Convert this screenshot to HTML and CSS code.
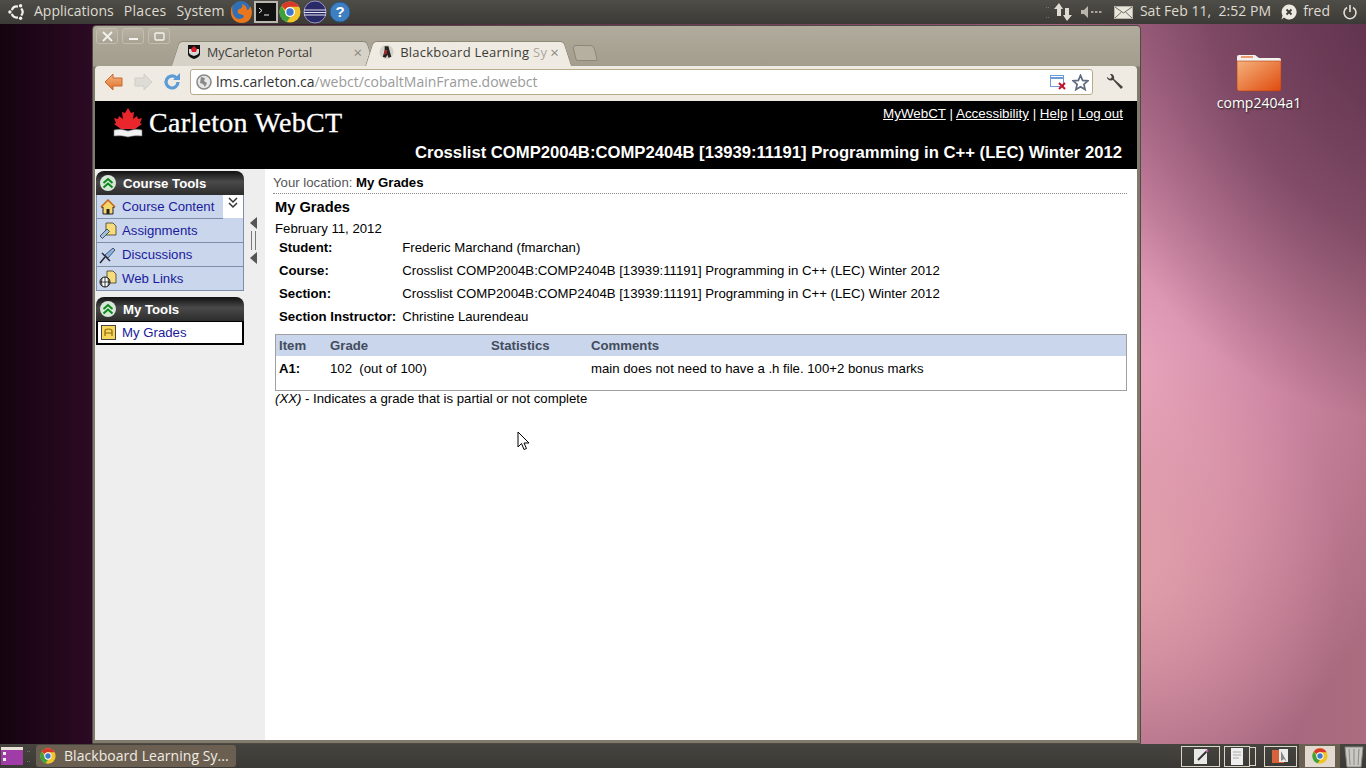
FILE: index.html
```html
<!DOCTYPE html>
<html>
<head>
    <title>Blackboard Learning System</title>
    <link rel="stylesheet" href="styles.css">
</head>
<body>
    <div class="desktop">
        <div class="top-panel">
            <div class="panel-left">
                <svg class="ubuntu-logo" width="18" height="18" viewBox="0 0 18 18"><path d="M9.960 3.580A5.500 5.500 0 0 0 3.830 7.120M3.830 10.880A5.500 5.500 0 0 0 9.960 14.420M13.210 12.540A5.500 5.500 0 0 0 13.210 5.460" fill="none" stroke="#f2f0ea" stroke-width="2.200"/><circle cx="1.900" cy="9" r="1.700" fill="#f2f0ea"/><circle cx="12.600" cy="2.800" r="1.700" fill="#f2f0ea"/><circle cx="12.600" cy="15.200" r="1.700" fill="#f2f0ea"/></svg>
                <span class="menu-item">Applications</span>
                <span class="menu-item menu-places">Places</span>
                <span class="menu-item menu-system">System</span>
                <div class="launchers">
                    <svg width="24" height="24" viewBox="0 0 24 24"><circle cx="12" cy="11" r="10" fill="#2f6fb5"/><path d="M4 4c-3 5-3 12 1 16s13 4 16-1 2-10 0-13c0 3-2 4-3 4 0-3-2-5-5-6 1 2 0 4-2 5-2 0-3 2-2 4 2 2 5 1 6 3-1 3-5 4-8 2S2 9 4 4z" fill="#e8761c"/></svg>
                    <svg width="24" height="24" viewBox="0 0 24 24"><rect x="1" y="2" width="22" height="20" fill="#111" stroke="#b9b7b0" stroke-width="2"/><path d="M5 8l3 2.500-3 2.500" fill="none" stroke="#eee"/><path d="M10 15h5" stroke="#eee"/></svg>
                    <svg width="22" height="22" viewBox="0 0 22 22"><use href="#chrome"/></svg>
                    <svg class="eclipse" width="24" height="24" viewBox="0 0 24 24"><circle cx="12" cy="12" r="11" fill="#2a2a66"/><circle cx="12" cy="12" r="11" fill="none" stroke="#9b93c9"/><path d="M1 10h22M1 12.500h22M1 15h22" stroke="#e6e4f2" stroke-width="1.200"/></svg>
                    <svg class="help" width="22" height="22" viewBox="0 0 22 22"><circle cx="11" cy="11" r="10" fill="#3d7fc1" stroke="#27598f"/><text x="11" y="16" class="help-mark">?</text></svg>
                </div>
            </div>
            <div class="panel-right">
                <span class="grip"></span>
                <svg width="20" height="20" viewBox="0 0 20 20"><path d="M1 7l5-6 4 6H8v7H4V7zM10 13h2V6h4v7h3l-5 6z" fill="#dedbd2"/></svg>
                <svg class="volume" width="22" height="14" viewBox="0 0 22 14"><path d="M0 5h3l4-4v12L3 9H0z" fill="#b9b6ad"/><path d="M10 7h2.500M14 7h2.500M18 7h2.500" stroke="#c6c3ba" stroke-width="1.300"/></svg>
                <svg class="mail" width="19" height="13" viewBox="0 0 19 13"><rect x=".5" y=".5" width="18" height="12" fill="#e9e6dc" stroke="#b8b5aa"/><path d="M1 1l8.500 6L18 1M1 12l6.500-6M18 12l-6.500-6" fill="none" stroke="#6e6b63"/></svg>
                <span class="clock">Sat Feb 11,&nbsp; 2:52 PM</span>
                <svg class="status" width="18" height="18" viewBox="0 0 18 18"><path d="M9 1.500a7.500 7.500 0 1 1-5 13l-2.500 2 1-4A7.500 7.500 0 0 1 9 1.500z" fill="#ece9e1"/><path d="M6.500 6.500l5 5M11.500 6.500l-5 5" stroke="#3b3a36" stroke-width="1.800"/></svg>
                <span class="user">fred</span>
                <svg class="power" width="16" height="16" viewBox="0 0 16 16"><path d="M5 3.500a6 6 0 1 0 6 0" fill="none" stroke="#e3e0d8" stroke-width="1.600"/><path d="M8 1v7" stroke="#e3e0d8" stroke-width="1.600"/></svg>
            </div>
        </div>

        <div class="desktop-icon">
            <svg width="46" height="39" viewBox="0 0 46 39"><path d="M1 4q0-2 2-2h16l4 3h20q2 0 2 2v8H1z" fill="#f4f2ee"/><rect x="5" y="3" width="12" height="2" fill="#ee9a70"/><defs><linearGradient id="folder" x1="0" y1="0" x2="1" y2="1"><stop offset="0" stop-color="#f5b27c"/><stop offset="1" stop-color="#df4a0e"/></linearGradient></defs><path d="M1 8h44v28q0 2-2 2H3q-2 0-2-2z" fill="url(#folder)" stroke="#b23c10" stroke-width=".6"/></svg>
            <span>comp2404a1</span>
        </div>

        <div class="window">
            <div class="titlebar">
                <div class="win-buttons">
                    <span class="win-btn"><svg width="11" height="11" viewBox="0 0 11 11"><path d="M1 1l9 9M10 1l-9 9" stroke="#f4f2ec" stroke-width="1.800"/></svg></span>
                    <span class="win-btn"><svg width="11" height="11" viewBox="0 0 11 11"><path d="M1 8h9" stroke="#f4f2ec" stroke-width="2"/></svg></span>
                    <span class="win-btn"><svg width="11" height="11" viewBox="0 0 11 11"><rect x="1" y="2" width="9" height="7" rx="1" fill="none" stroke="#f4f2ec" stroke-width="1.400"/></svg></span>
                </div>
                <div class="tabs">
                    <div class="tab tab-back">
                        <svg width="16" height="16" viewBox="0 0 16 16"><path d="M2 1h12v9q0 3-6 5-6-2-6-5z" fill="#111"/><path d="M3 5h10v4q-1 2-5 3-4-1-5-3z" fill="#d8d8d8"/><path d="M8 2l3 3-1 3H6L5 5z" fill="#d8202e"/></svg>
                        <span class="tab-title">MyCarleton Portal</span>
                        <span class="tab-close">×</span>
                    </div>
                    <div class="tab tab-active">
                        <svg width="16" height="16" viewBox="0 0 16 16"><circle cx="8" cy="8" r="7.500" fill="#d5d2cc"/><path d="M6 2h4l1 4 2 7-3 1-1-3-2 3-3-1 2-6z" fill="#26211f"/><path d="M6 6h3l-1 4-3 1z" fill="#9c2a2a"/></svg>
                        <span class="tab-title">Blackboard Learning <span class="tab-fade">Sy</span></span>
                        <span class="tab-close">×</span>
                    </div>
                    <div class="new-tab"></div>
                </div>
            </div>
            <div class="toolbar">
                <svg width="20" height="18" viewBox="0 0 20 18"><defs><linearGradient id="back" x1="0" y1="0" x2="0" y2="1"><stop offset="0" stop-color="#f4b684"/><stop offset="1" stop-color="#e0702a"/></linearGradient></defs><path d="M9 1L1 9l8 8v-4h9V5H9z" fill="url(#back)" stroke="#c8682c"/></svg>
                <svg width="20" height="18" viewBox="0 0 20 18"><path d="M11 1l8 8-8 8v-4H2V5h9z" fill="#dedcd6" stroke="#cfcdc6"/></svg>
                <svg class="reload" width="18" height="18" viewBox="0 0 18 18"><path d="M15 9a6 6 0 1 1-2-4.500" fill="none" stroke="#5b9bd8" stroke-width="3.200"/><path d="M10 7h7V0z" fill="#5b9bd8"/></svg>
                <div class="omnibox">
                    <svg width="16" height="16" viewBox="0 0 16 16"><circle cx="8" cy="8" r="7" fill="#e8e8e8" stroke="#8a8a8a" stroke-width="1.600"/><path d="M5 3l4 1-1 3 3 2-2 4-2-3-3-1z" fill="#8a8a8a"/></svg>
                    <span class="url"><span class="url-host">lms.carleton.ca</span>/webct/cobaltMainFrame.dowebct</span>
                    <svg class="popup-blocked" width="16" height="16" viewBox="0 0 16 16"><rect x=".5" y="1.500" width="13" height="11" fill="#fff" stroke="#6c9bd8"/><path d="M1 3h12v2H1z" fill="#6c9bd8"/><path d="M9 9l6 6M15 9l-6 6" stroke="#c4122c" stroke-width="2"/></svg>
                    <svg width="17" height="17" viewBox="0 0 24 24"><path d="M12 2l3 7 7.500.7-5.700 5 1.700 7.300L12 18l-6.500 4 1.700-7.300-5.700-5L9 9z" fill="#fff" stroke="#5f6b80" stroke-width="2.400"/></svg>
                </div>
                <svg class="wrench" width="18" height="18" viewBox="0 0 18 18"><path d="M1 5a4.500 4.500 0 0 0 6 2l8 9 2-2-9-8a4.500 4.500 0 0 0-2-5L4 1l2 3-2 2-3-2z" fill="#46443f"/></svg>
            </div>

            <div class="page">
                <div class="banner">
                    <div class="banner-top">
                        <div class="logo">
                            <svg width="32" height="30" viewBox="0 0 32 30"><path d="M16 0l3 5 3-1-1 7 4-3 1 3 4-1-2 5 2 1-7 5H9l-7-5 2-1-2-5 4 1 1-3 4 3-1-7 3 1z" fill="#e8262c"/><path d="M2 22q7-2 14 1 7-3 14-1v6q-7-1-14 1-7-2-14-1z" fill="#f2f2f2" stroke="#777" stroke-width=".6"/></svg>
                            <span class="logo-text">Carleton WebCT</span>
                        </div>
                        <div class="banner-links"><a href="#">MyWebCT</a> | <a href="#">Accessibility</a> | <a href="#">Help</a> | <a href="#">Log out</a></div>
                    </div>
                    <div class="course-title">Crosslist COMP2004B:COMP2404B [13939:11191] Programming in C++ (LEC) Winter 2012</div>
                </div>
                <div class="page-body">
                    <div class="sidebar">
                        <div class="tool-head"><span class="head-icon"><svg width="12" height="12" viewBox="0 0 12 12"><path d="M1.500 6l4.500-4 4.500 4M1.500 10.500l4.500-4 4.500 4" fill="none" stroke="#0a8a1c" stroke-width="2"/></svg></span>Course Tools</div>
                        <div class="tool-list">
                            <div class="tool-row tool-row-first">
                                <div class="tool-link">
                                    <svg width="18" height="16" viewBox="0 0 18 16"><path d="M2 8l7-7 7 7h-2v7H4V8z" fill="#f7d66a" stroke="#222"/><path d="M2 8l7-7 7 7" fill="none" stroke="#c8641c" stroke-width="1.500"/><rect x="7.500" y="10" width="3" height="5" fill="#222"/></svg>
                                    <a href="#">Course Content</a>
                                </div>
                                <div class="tool-toggle"><svg width="10" height="12" viewBox="0 0 10 12"><path d="M1 1l4 4 4-4M1 6l4 4 4-4" fill="none" stroke="#333" stroke-width="1.500"/></svg></div>
                            </div>
                            <div class="tool-link">
                                <svg width="18" height="18" viewBox="0 0 18 18"><path d="M7 1h7l3 3v9H7z" fill="#f7dc7c" stroke="#222" stroke-width=".7"/><path d="M1 14l7-7 2.500 2.500-7 7z" fill="#9cc0dc" stroke="#222" stroke-width=".7"/></svg>
                                <a href="#">Assignments</a>
                            </div>
                            <div class="tool-link">
                                <svg width="18" height="18" viewBox="0 0 18 18"><path d="M1 17l5-6" stroke="#223" stroke-width="1.400"/><path d="M3 7l8 8" stroke="#223" stroke-width="1.400"/><path d="M6 9l8-7 2 2-7 8z" fill="#8cb4e0" stroke="#223" stroke-width=".7"/></svg>
                                <a href="#">Discussions</a>
                            </div>
                            <div class="tool-link">
                                <svg width="18" height="18" viewBox="0 0 18 18"><path d="M8 1h6l3 3v9H8z" fill="#f7dc7c" stroke="#222" stroke-width=".7"/><circle cx="6" cy="12" r="5" fill="#fff" stroke="#111"/><path d="M1 12h10M6 7v10M3 8q-1 4 0 8M9 8q1 4 0 8" fill="none" stroke="#111" stroke-width=".8"/></svg>
                                <a href="#">Web Links</a>
                            </div>
                        </div>
                        <div class="tool-head tool-head-second"><span class="head-icon"><svg width="12" height="12" viewBox="0 0 12 12"><path d="M1.500 6l4.500-4 4.500 4M1.500 10.500l4.500-4 4.500 4" fill="none" stroke="#0a8a1c" stroke-width="2"/></svg></span>My Tools</div>
                        <div class="tool-selected">
                            <svg width="15" height="15" viewBox="0 0 15 15"><rect x=".5" y=".5" width="14" height="14" fill="#f7d65a" stroke="#444"/><path d="M4 11V6q0-2 3.500-2T11 6v5M4 8h7" fill="none" stroke="#8a6a10" stroke-width="1.200"/></svg>
                            <a href="#">My Grades</a>
                        </div>
                    </div>
                    <div class="collapse-bar">
                        <svg width="7" height="12" viewBox="0 0 7 12"><path d="M7 0v12L0 6z" fill="#555"/></svg>
                        <span class="collapse-grip"></span>
                        <svg width="7" height="12" viewBox="0 0 7 12"><path d="M7 0v12L0 6z" fill="#555"/></svg>
                    </div>
                    <div class="content">
                        <div class="breadcrumb">Your location: <b>My Grades</b></div>
                        <h1 class="page-title">My Grades</h1>
                        <div class="page-date">February 11, 2012</div>
                        <table class="info-table">
                            <tr><th>Student:</th><td>Frederic Marchand (fmarchan)</td></tr>
                            <tr><th>Course:</th><td>Crosslist COMP2004B:COMP2404B [13939:11191] Programming in C++ (LEC) Winter 2012</td></tr>
                            <tr><th>Section:</th><td>Crosslist COMP2004B:COMP2404B [13939:11191] Programming in C++ (LEC) Winter 2012</td></tr>
                            <tr><th>Section Instructor:</th><td>Christine Laurendeau</td></tr>
                        </table>
                        <table class="grades-table">
                            <tr class="grades-head"><th class="col-item">Item</th><th class="col-grade">Grade</th><th class="col-stats">Statistics</th><th>Comments</th></tr>
                            <tr><td><b>A1:</b></td><td>102&nbsp; (out of 100)</td><td></td><td>main does not need to have a .h file. 100+2 bonus marks</td></tr>
                        </table>
                        <div class="grade-note"><i>(XX)</i> - Indicates a grade that is partial or not complete</div>
                    </div>
                </div>
            </div>
        </div>

        <svg class="cursor" width="14" height="20" viewBox="0 0 14 20"><path d="M1 1v15l3.500-3.500L7 18.500l2.500-1L7 12h5z" fill="#fff" stroke="#000"/></svg>

        <div class="bottom-panel">
            <div class="panel-left">
                <svg class="show-desktop" width="22" height="18" viewBox="0 0 22 18"><rect x="0" y="0" width="22" height="3" fill="#e8e4d8"/><rect x="0" y="3" width="22" height="15" fill="#a03ca8"/><rect x="2" y="5" width="3" height="3" fill="#eee"/><rect x="2" y="11" width="3" height="3" fill="#eee"/></svg>
                <span class="grip"></span>
                <div class="task">
                    <svg width="16" height="16" viewBox="0 0 22 22"><use href="#chrome"/></svg>
                    <span>Blackboard Learning Sy...</span>
                </div>
            </div>
            <div class="panel-right">
                <div class="workspace"><svg width="16" height="17" viewBox="0 0 16 17"><rect x="1" y="1" width="13" height="15" fill="#e8e8e6"/><path d="M5 12L14 3" stroke="#333" stroke-width="2"/><path d="M13 4l2-2" stroke="#c060b0" stroke-width="2"/></svg></div>
                <div class="workspace workspace-small"><svg width="14" height="17" viewBox="0 0 14 17"><rect x="1" y="0" width="12" height="17" fill="#eee"/><path d="M3 4h8M3 7h8M3 10h6" stroke="#aaa"/></svg></div>
                <div class="workspace workspace-files"><svg width="18" height="16" viewBox="0 0 18 16"><rect x="0" y="2" width="12" height="13" fill="#d8633a"/><rect x="7" y="1" width="9" height="13" fill="#ececec"/><path d="M9 3v10l3-2 3 3z" fill="#888"/></svg></div>
                <div class="active-slot"><div class="workspace-active"><svg width="16" height="16" viewBox="0 0 22 22"><use href="#chrome"/></svg></div></div>
                <svg class="trash" width="22" height="24" viewBox="0 0 22 24"><path d="M2 3h18l-2 20H4z" fill="#c9c8c2" stroke="#8a8983"/><path d="M6 5l1 16M11 5v16M16 5l-1 16" stroke="#8a8983"/></svg>
            </div>
        </div>
    </div>

    <svg class="defs-only" width="0" height="0">
        <symbol id="chrome" viewBox="0 0 22 22">
            <circle cx="11" cy="11" r="10.500" fill="#f2c42c"/>
            <path d="M11 .5a10.500 10.500 0 0 1 9.100 5.250H11a5.250 5.250 0 0 0-4.700 3L2.500 4.800A10.500 10.500 0 0 1 11 .5z" fill="#d9392b"/>
            <path d="M2.500 4.800l4 6.900a5 5 0 0 0 4.600 4.500L7.700 21A10.500 10.500 0 0 1 2.500 4.800z" fill="#3da13f"/>
            <circle cx="11" cy="11" r="5" fill="#fff"/><circle cx="11" cy="11" r="3.700" fill="#3f78cf"/>
        </symbol>
    </svg>
</body>
</html>
```

FILE: styles.css
```css
html, body {
    margin: 0;
    height: 100%;
    overflow: hidden;
}
.desktop {
    position: relative;
    width: 1366px;
    height: 768px;
    overflow: hidden;
    font-family: "Open Sans", "Noto Sans", sans-serif;
    background:
        radial-gradient(ellipse 340px 420px at 1400px 0, #5c2f4c 0%, rgba(92,47,76,0.6) 55%, rgba(92,47,76,0) 100%),
        radial-gradient(ellipse 210px 260px at 1130px 580px, rgba(232,168,172,0.75) 0%, rgba(232,168,172,0) 100%),
        radial-gradient(ellipse 300px 420px at 1130px 370px, #e8a4be 0%, rgba(226,150,180,0.65) 50%, rgba(200,120,150,0) 100%),
        linear-gradient(90deg, #150410 0, #2c0a24 93px, #a0607e 1140px, #ab6c80 1366px);
    display: flex;
    flex-direction: column;
    justify-content: space-between;
}
.defs-only { position: absolute; }

/* panels */
.top-panel, .bottom-panel {
    height: 24px;
    display: flex;
    justify-content: space-between;
    align-items: center;
    color: #dfdbd2;
    font-size: 14px;
}
.top-panel { background: linear-gradient(#4f4d47, #3b3a36); }
.bottom-panel { background: linear-gradient(#45443f, #3a3935); }
.panel-left, .panel-right {
    display: flex;
    align-items: center;
    height: 100%;
}
.menu-item, .clock, .user { margin-top: -4px; }
.ubuntu-logo { margin: 0 8px; }
.menu-item { margin-right: 10px; }
.menu-places { letter-spacing: 0.3px; }
.menu-system { letter-spacing: 0.15px; }
.launchers {
    display: flex;
    align-items: center;
    gap: 1px;
    margin-left: -6px;
}
.eclipse { margin-left: 1px; }
.help { margin-left: 1px; }
.help-mark {
    font-family: "Liberation Sans", sans-serif;
    font-size: 15px;
    font-weight: bold;
    fill: #fff;
    text-anchor: middle;
}
.grip {
    width: 3px;
    height: 9px;
    margin: 0 4px;
    border-top: 1px dotted #77746c;
    border-bottom: 1px dotted #77746c;
}
.panel-right .volume { margin-left: 8px; }
.panel-right .mail { margin-left: 11px; }
.clock { margin-left: 7px; letter-spacing: 0.03px; }
.status { margin-left: 9px; }
.user { margin-left: 5px; }
.power { margin: 0 8px 0 12px; }

.desktop-icon {
    position: absolute;
    left: 1209px;
    top: 53px;
    width: 100px;
    display: flex;
    flex-direction: column;
    align-items: center;
    gap: 1px;
    color: #fff;
    font-size: 14px;
    text-shadow: 1px 1px 2px #222;
}

/* browser window */
.window {
    position: absolute;
    left: 92px;
    top: 25px;
    width: 1042px;
    height: 714px;
    padding: 0 3px 3px 2px;
    background: linear-gradient(#b0ab9c 0, #a39d8d 40px, #807b6d 41px, #807b6d 100%);
    border: 1px solid #4f4a42;
    border-radius: 4px 4px 0 0;
    display: flex;
    flex-direction: column;
}
.titlebar {
    height: 40px;
    position: relative;
    flex: none;
}
.win-buttons {
    position: absolute;
    left: 1px;
    top: 2px;
    display: flex;
    gap: 4px;
}
.win-btn {
    width: 20px;
    height: 14px;
    display: flex;
    align-items: center;
    justify-content: center;
    border: 1px solid #c2bdae;
    border-radius: 3px;
    background: linear-gradient(#b8b3a4, #a8a293);
}
.tabs {
    position: absolute;
    left: 80px;
    bottom: 0;
    display: flex;
    align-items: flex-end;
}
.tab {
    position: relative;
    isolation: isolate;
    height: 25px;
    box-sizing: border-box;
    padding: 0 9px 3px 11px;
    display: flex;
    align-items: center;
    gap: 3px;
    font-size: 12.5px;
    color: #3c3b37;
}
.tab::before, .tab::after {
    content: "";
    position: absolute;
    z-index: -1;
    top: 0;
    bottom: 0;
    width: 55%;
    border: 1px solid #8d8778;
    border-bottom: 0;
    background: #d6d2c7;
}
.tab::before {
    left: 0;
    border-right: 0;
    border-radius: 4px 0 0 0;
    transform: skewX(-18deg);
}
.tab::after {
    right: 0;
    border-left: 0;
    border-radius: 0 4px 0 0;
    transform: skewX(18deg);
}
.tab-back { width: 196px; }
.tab-active {
    width: 199px;
    margin-left: -2px;
    padding-left: 10px;
    z-index: 1;
    font-size: 13px;
    letter-spacing: 0.25px;
}
.tab-active::before, .tab-active::after { background: #efebe3; }
.tab-title {
    flex: 1;
    white-space: nowrap;
    margin-left: 2px;
}
.tab-active .tab-title { margin-left: 3px; }
.tab-fade { color: #a9a69e; }
.tab-close { color: #8a8880; font-size: 15px; }
.new-tab {
    width: 20px;
    height: 14px;
    margin: 0 0 5px 6px;
    background: #b5b0a0;
    border: 1px solid #8d8778;
    border-radius: 4px 4px 2px 2px;
    transform: skewX(14deg);
}
.toolbar {
    height: 35px;
    flex: none;
    box-sizing: border-box;
    background: #efebe3;
    border-radius: 4px 4px 0 0;
    display: flex;
    align-items: center;
    padding: 0 13px 3px 9px;
    gap: 9px;
}
.reload { margin-left: 1px; }
.omnibox {
    flex: 1;
    height: 26px;
    box-sizing: border-box;
    background: #fff;
    border: 1px solid #b7ab8c;
    border-radius: 3px;
    display: flex;
    align-items: center;
    padding: 0 3px 0 5px;
    gap: 4px;
    font-size: 14px;
    color: #9a9a9a;
}
.url { flex: 1; margin-top: -1px; }
.url-host { color: #333; }
.popup-blocked { margin-right: 2px; }
.wrench { margin-left: 4px; }

/* page inside the browser */
.page {
    flex: 1;
    display: flex;
    flex-direction: column;
    font-family: "Liberation Sans", Arial, sans-serif;
    font-size: 13.2px;
    color: #000;
    background: #fff;
    min-height: 0;
}
.banner {
    background: #000;
    color: #fff;
    height: 68px;
    flex: none;
    display: flex;
    flex-direction: column;
    padding-right: 14px;
    box-sizing: border-box;
}
.banner-top {
    display: flex;
    justify-content: space-between;
    height: 42px;
}
.banner-links { margin-top: 5px; font-size: 13.4px; }
.banner-links a { color: #fff; }
.logo {
    display: flex;
    align-items: center;
    margin: 6px 0 0 17px;
    gap: 5px;
    height: 32px;
}
.logo-text {
    font-family: "Liberation Serif", "Times New Roman", serif;
    font-size: 28px;
    letter-spacing: 0.3px;
    -webkit-text-stroke: 0.3px #fff;
}
.course-title {
    text-align: right;
    font-size: 16.67px;
    font-weight: bold;
    padding-right: 1px;
}
.page-body {
    flex: 1;
    display: flex;
    background: #eeeeee;
    min-height: 0;
}
.sidebar {
    width: 148px;
    margin: 2px 0 0 1px;
    flex: none;
}
.tool-head {
    height: 24px;
    box-sizing: border-box;
    background: linear-gradient(#111 0, #4a4a4a 45%, #2c2c2c 100%);
    border-radius: 8px 8px 0 0;
    color: #fff;
    font-weight: bold;
    display: flex;
    align-items: center;
    padding-left: 4px;
    gap: 7px;
}
.tool-head-second { margin-top: 6px; }
.head-icon {
    width: 16px;
    height: 16px;
    background: #d8e8d8;
    border-radius: 50%;
    display: flex;
    align-items: center;
    justify-content: center;
}
.tool-list {
    border: 1px solid #7d8ea8;
    border-top: 0;
    background: #c9d6ec;
}
.tool-link {
    height: 23px;
    border-bottom: 1px solid #7d8ea8;
    display: flex;
    align-items: center;
    padding-left: 2px;
    gap: 5px;
}
.tool-link:last-child { border-bottom: 0; }
.tool-link svg { flex: none; }
.tool-link a, .tool-selected a {
    color: #1a1a9c;
    text-decoration: none;
}
.tool-row { display: flex; }
.tool-row-first .tool-link { flex: 1; }
.tool-toggle {
    width: 20px;
    height: 23px;
    background: #fff;
    display: flex;
    justify-content: center;
    padding-top: 2px;
    box-sizing: border-box;
}
.tool-selected {
    height: 24px;
    box-sizing: border-box;
    border: 2px solid #000;
    border-top-width: 1px;
    background: #fff;
    display: flex;
    align-items: center;
    padding-left: 3px;
    gap: 6px;
}
.collapse-bar {
    width: 21px;
    flex: none;
    display: flex;
    flex-direction: column;
    align-items: center;
    padding-top: 48px;
    padding-right: 2px;
    box-sizing: border-box;
    gap: 2px;
}
.collapse-grip {
    width: 3px;
    height: 19px;
    border: 1px solid #777;
    border-top: 0;
    border-bottom: 0;
}
.content {
    flex: 1;
    background: #fff;
    padding: 0 10px 0 10px;
}
.breadcrumb {
    color: #555;
    padding: 6px 0 3px 0;
    margin: 0 0 0 -2px;
    border-bottom: 1px dotted #888;
    height: 15px;
}
.breadcrumb b { color: #000; }
.page-title {
    font-size: 14.67px;
    margin: 5px 0 6px 0;
}
.info-table { border-collapse: collapse; }
.info-table th {
    text-align: left;
    padding: 0 6px 0 4px;
    height: 23px;
}
.info-table td { padding: 0; }
.grades-table {
    width: 852px;
    margin-top: 6px;
    border-collapse: collapse;
    border: 1px solid #a0a0a0;
}
.grades-table th {
    text-align: left;
    color: #444c5c;
    background: #c9d6ec;
    height: 21px;
    padding: 0 3px;
}
.grades-table td {
    height: 34px;
    padding: 0 3px 8px 3px;
    box-sizing: border-box;
}
.col-item { width: 45px; }
.col-grade { width: 155px; }
.col-stats { width: 94px; }
.cursor {
    position: absolute;
    left: 517px;
    top: 431px;
}

/* bottom panel */
.show-desktop { margin-left: 1px; }
.task {
    width: 200px;
    height: 22px;
    box-sizing: border-box;
    margin-left: 2px;
    padding: 0 0 2px 4px;
    background: #6a5f51;
    border-radius: 3px;
    color: #f0ece3;
    display: flex;
    align-items: center;
    gap: 8px;
    letter-spacing: 0.05px;
}
.task svg { margin-top: 2px; }
.workspace {
    position: relative;
    width: 37px;
    height: 19px;
    border: 1px solid #d8d4c6;
    display: flex;
    align-items: center;
    justify-content: center;
    margin-right: 4px;
}
.workspace-small { width: 24px; margin-right: 14px; }
.workspace-small::after {
    content: "";
    position: absolute;
    top: 0;
    left: 24px;
    width: 6px;
    height: 17px;
    border: 1px solid #d8d4c6;
    border-left: 0;
}
.workspace-files { width: 31px; margin-right: 2px; }
.active-slot {
    width: 41px;
    height: 24px;
    background: #6a5f51;
    display: flex;
    align-items: center;
    justify-content: center;
}
.workspace-active {
    width: 30px;
    height: 21px;
    background: #e2dad0;
    display: flex;
    align-items: center;
    justify-content: center;
}
.trash { margin: 0 1px 0 3px; }
```
